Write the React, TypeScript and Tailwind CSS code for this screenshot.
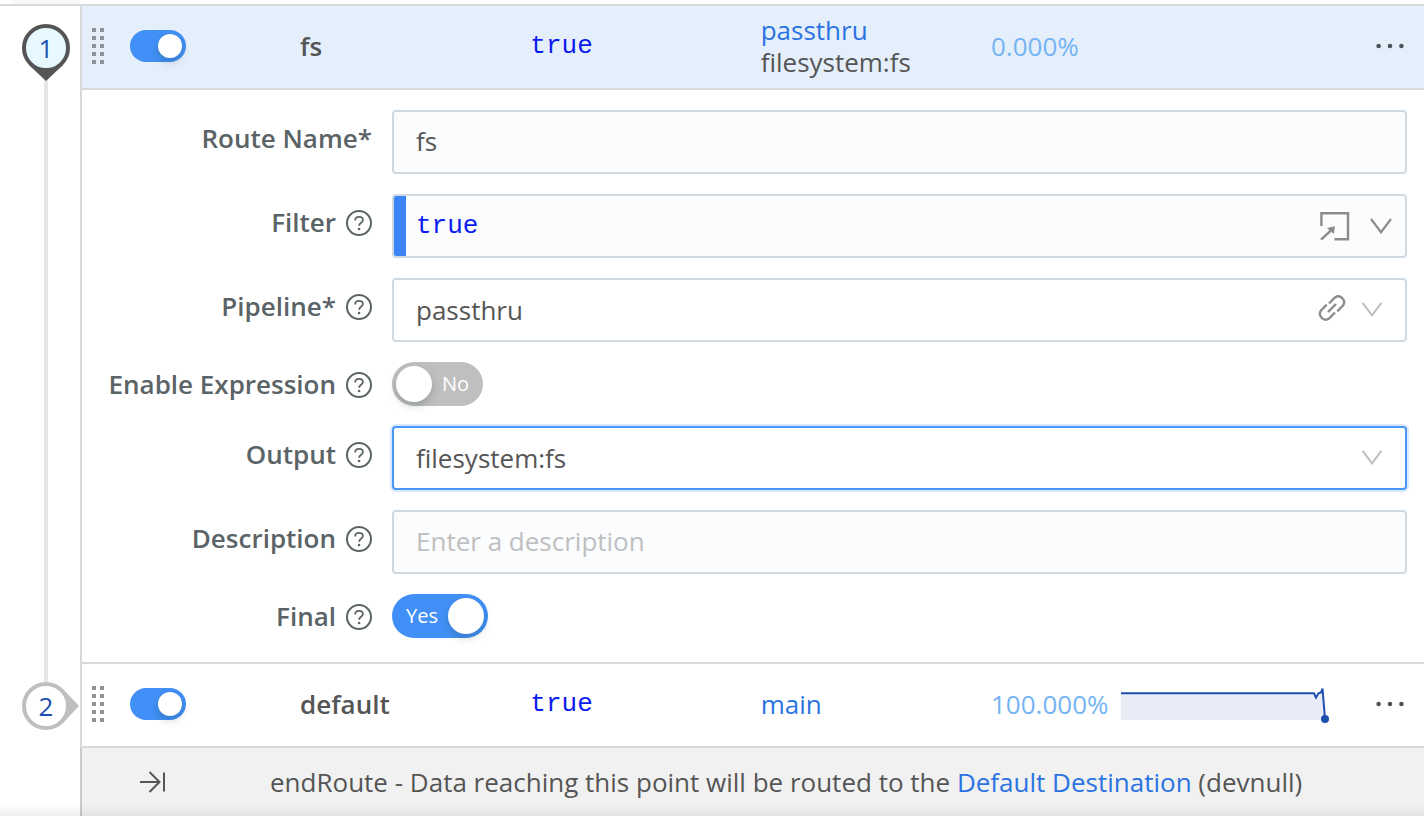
import { useState } from 'react'
import type { ReactNode } from 'react'
import clsx from 'clsx'

const ROW_GRID = 'grid grid-cols-[38px_170px_1fr_1fr_1fr_433px] items-center pl-[10px]'
const FIELD = 'h-16 w-full rounded-[4px] border-2 border-[#cfd9e1] px-[22px] pb-[2px] text-[26px] text-[#555] outline-none'

interface PinProps {
  index: number
  expanded?: boolean
}

/** Numbered marker in the gutter. Points down at an expanded route, right at a collapsed one. */
function RoutePin({ index, expanded }: PinProps) {
  return (
    <div className="relative ml-[22px] h-12 w-12 shrink-0">
      <svg
        viewBox="0 0 58 58"
        aria-hidden="true"
        className={clsx('absolute top-0 left-0 z-10 h-[58px] w-[58px]', expanded ? 'text-[#555]' : 'text-[#bfbfbf]')}
      >
        <path d={expanded ? 'M7 41 24 57 41 41Z' : 'M41 7 57 24 41 41Z'} fill="currentColor" />
        <circle cx="24" cy="24" r="22" fill={expanded ? '#e8f8ff' : '#fff'} stroke="currentColor" strokeWidth="4" />
      </svg>
      <span className="absolute inset-0 z-20 text-center text-[26px] leading-12 text-[#1d4fb0]">{index}</span>
    </div>
  )
}

function GripHandle() {
  return (
    <button type="button" aria-label="Drag to reorder" className="grid w-3 grid-cols-2 gap-1">
      {Array.from({ length: 10 }, (_, i) => (
        <span key={i} className="h-1 w-1 bg-[#8e9299]" />
      ))}
    </button>
  )
}

function RowSwitch({ label }: { label: string }) {
  const [on, setOn] = useState(true)
  return (
    <label
      className={clsx(
        'relative flex h-8 w-14 cursor-pointer items-center rounded-full px-1',
        on ? 'justify-end bg-[#4290f7]' : 'justify-start bg-[#bfbfbf]',
      )}
    >
      <input type="checkbox" role="switch" aria-label={label} checked={on} onChange={() => setOn(!on)} className="sr-only" />
      <span className="h-6 w-6 rounded-full bg-white shadow-[0_4px_8px_rgba(0,35,11,0.2)]" />
    </label>
  )
}

function YesNoSwitch({ id, initial }: { id: string; initial: boolean }) {
  const [on, setOn] = useState(initial)
  return (
    <label
      className={clsx(
        'relative flex h-11 cursor-pointer items-center gap-[10px] rounded-full text-[20px] font-medium text-white',
        on ? 'w-24 flex-row-reverse bg-[#4290f7] pr-1' : 'w-[91px] bg-[#bfbfbf] pl-1',
      )}
    >
      <input id={id} type="checkbox" role="switch" checked={on} onChange={() => setOn(!on)} className="sr-only" />
      <span className="h-9 w-9 rounded-full bg-white shadow-[0_4px_8px_rgba(0,35,11,0.2)]" />
      <span>{on ? 'Yes' : 'No'}</span>
    </label>
  )
}

function HelpIcon() {
  return (
    <button type="button" aria-label="Help" className="text-[#5a6366]">
      <svg width="26" height="26" viewBox="0 0 26 26" fill="none" stroke="currentColor" strokeWidth="2">
        <circle cx="13" cy="13" r="12" />
        <path d="M9.2 10.4C9.2 8 10.8 6.8 13 6.8s3.9 1.3 3.9 3.3c0 2.6-3.8 2.7-3.8 5.6" strokeWidth="1.8" />
        <circle cx="13.1" cy="19" r="1.3" fill="currentColor" stroke="none" />
      </svg>
    </button>
  )
}

function Chevron({ className }: { className: string }) {
  return (
    <svg viewBox="0 0 22 16" fill="none" stroke="currentColor" strokeWidth="2.2" aria-hidden="true" className={className}>
      <path d="M1 1 11 14.2 21 1" />
    </svg>
  )
}

interface FormRowProps {
  id: string
  label: string
  help?: boolean
  compact?: boolean
  children: ReactNode
}

function FormRow({ id, label, help = true, compact, children }: FormRowProps) {
  return (
    <div className="grid grid-cols-[290px_1fr] gap-5">
      <div className={clsx('flex items-center justify-end gap-[10px]', compact ? 'h-[46px] -mb-[2px]' : 'h-[58px]')}>
        <label htmlFor={id} className="pb-[2px] text-[26px] font-semibold whitespace-nowrap text-[#5a6366]">
          {label}
        </label>
        {help && <HelpIcon />}
      </div>
      <div className="flex min-w-0">{children}</div>
    </div>
  )
}

interface SelectFieldProps {
  id: string
  value: string
  active?: boolean
}

function SelectField({ id, value, active }: SelectFieldProps) {
  return (
    <select
      id={id}
      defaultValue={value}
      className={clsx(
        'h-16 w-full appearance-none rounded-[4px] border-2 bg-white px-[22px] text-[26px] text-[#555] outline-none',
        active ? 'border-[#4a98fa] shadow-[0_0_0_2px_#d9e8fc]' : 'border-[#cfd9e1]',
      )}
    >
      <option>{value}</option>
    </select>
  )
}

function MoreButton() {
  return (
    <button type="button" aria-label="More actions" className="ml-auto text-[#4d5257]">
      <svg width="28" height="6" viewBox="0 0 28 6" fill="currentColor">
        <circle cx="2.6" cy="3" r="2.3" />
        <circle cx="14" cy="3" r="2.3" />
        <circle cx="25.4" cy="3" r="2.3" />
      </svg>
    </button>
  )
}

function Sparkline() {
  return (
    <svg width="210" height="38" viewBox="0 0 210 38" fill="none" aria-hidden="true" className="ml-3">
      <path d="M0 8H193L195 12 198 8 201 4 204 35H0Z" fill="#e8ecf6" />
      <path d="M0 8.3H193L195 12.6 197.5 8.3 200 7.5 201.5 3.5 204 34" stroke="#1d4fb0" strokeWidth="2" />
      <circle cx="204" cy="34" r="4" fill="#1d4fb0" />
    </svg>
  )
}

function RouteForm() {
  return (
    <form className="flex flex-col gap-5 border-b-2 border-[#d9d9db] pt-5 pr-[17px] pb-6">
      <FormRow id="route-name" label="Route Name*" help={false}>
        <input id="route-name" type="text" defaultValue="fs" className={clsx(FIELD, 'bg-[#fafcfe]')} />
      </FormRow>
      <FormRow id="filter" label="Filter">
        <div className="flex h-16 w-full items-center overflow-hidden rounded-[4px] border-2 border-[#cfd9e1] bg-[#fafcfe] pr-[13px] text-[#8c8c8c]">
          <span className="w-3 self-stretch bg-[#3a84f7]" />
          <input
            id="filter"
            type="text"
            defaultValue="true"
            className="h-full min-w-0 flex-1 px-[10px] font-['Liberation_Mono',monospace] text-[26px] text-[#0a1cf0] outline-none"
          />
          <button type="button" aria-label="Open filter editor">
            <svg width="30" height="30" viewBox="0 0 30 30" fill="none" stroke="currentColor" strokeWidth="2.4">
              <path d="M1.4 15V2.2H28V28.2H14.5M1 28.6 12.5 18" />
              <path d="M7 17 15 15.2 13.8 23Z" fill="currentColor" stroke="none" />
            </svg>
          </button>
          <button type="button" aria-label="Expand filter" className="ml-5">
            <Chevron className="h-4 w-[22px]" />
          </button>
        </div>
      </FormRow>
      <FormRow id="pipeline" label="Pipeline*">
        <div className="relative w-full">
          <SelectField id="pipeline" value="passthru" />
          <button type="button" aria-label="Open pipeline" className="absolute top-4 right-[61px] text-[#8c8c8c]">
            <svg width="28" height="28" viewBox="0 0 28 28" fill="none" stroke="currentColor" strokeWidth="2.4">
              <path d="M11 9.5 17 3.5a5.8 5.8 0 0 1 8 8.1L19.3 17.3" />
              <path d="M17 18.5 11 24.5a5.8 5.8 0 0 1-8-8.1L8.7 10.7" />
              <path d="M10 18 18 10" />
            </svg>
          </button>
          <Chevron className="pointer-events-none absolute top-6 right-6 h-[15px] w-[22px] text-[#bfbfbf]" />
        </div>
      </FormRow>
      <FormRow id="enable-expression" label="Enable Expression" compact>
        <YesNoSwitch id="enable-expression" initial={false} />
      </FormRow>
      <FormRow id="output" label="Output">
        <div className="relative w-full">
          <SelectField id="output" value="filesystem:fs" active />
          <Chevron className="pointer-events-none absolute top-6 right-6 h-[15px] w-[22px] text-[#bfbfbf]" />
        </div>
      </FormRow>
      <FormRow id="description" label="Description">
        <input
          id="description"
          type="text"
          placeholder="Enter a description"
          className={clsx(FIELD, 'bg-[#fafcfe] placeholder:text-[#bfbfbf]')}
        />
      </FormRow>
      <FormRow id="final" label="Final" compact>
        <YesNoSwitch id="final" initial />
      </FormRow>
    </form>
  )
}

interface RouteRowProps {
  name: string
  pipeline: string
  output?: string
  share: string
  selected?: boolean
  chart?: boolean
}

function RouteRow({ name, pipeline, output, share, selected, chart }: RouteRowProps) {
  return (
    <div className={clsx(ROW_GRID, 'h-[84px] border-b-2 border-[#d9d9db] pb-[2px] text-[26px] leading-8', selected && 'bg-[#e4effb]')}>
      <GripHandle />
      <RowSwitch label={`Enable route ${name}`} />
      <span className="font-semibold text-[#555]">{name}</span>
      <code className="font-['Liberation_Mono',monospace] text-[#0a1cf0]">true</code>
      <div className="flex flex-col items-start text-[#555]">
        <a href="#pipeline" className="text-[#2b73e2]">
          {pipeline}
        </a>
        {output && <span>{output}</span>}
      </div>
      <div className="flex items-center pr-5 text-[#75b4f3]">
        <span>{share}</span>
        {chart && <Sparkline />}
        <MoreButton />
      </div>
    </div>
  )
}

export default function App() {
  return (
    <main className="relative min-h-screen overflow-hidden bg-white font-['Open_Sans',sans-serif]">
      <div className="h-1.5 border-b-2 border-[#d9d9db] pl-3">
        <div className="h-1 w-[68px] rounded-b-[4px] bg-[#f8f8f8]" />
      </div>

      <section className="grid grid-cols-[80px_1fr]">
        <div className="flex flex-col pt-[18px]">
          <RoutePin index={1} expanded />
          <div className="ml-11 w-1 flex-1 bg-[#e6e6e6]" />
        </div>
        <div className="border-l-2 border-[#d9d9db]">
          <RouteRow name="fs" pipeline="passthru" output="filesystem:fs" share="0.000%" selected />
          <RouteForm />
        </div>
      </section>

      <section className="grid grid-cols-[80px_1fr]">
        <div className="flex flex-col">
          <div className="ml-11 h-[18px] w-1 bg-[#e6e6e6]" />
          <RoutePin index={2} />
        </div>
        <div className="border-l-2 border-[#d9d9db]">
          <RouteRow name="default" pipeline="main" share="100.000%" chart />
        </div>
      </section>

      <footer className="ml-20 flex h-[68px] items-center border-l-2 border-[#cbcbcb] bg-[#f1f1f1] pl-[58px] text-[26px] text-[#555]">
        <svg width="26" height="26" viewBox="0 0 26 26" fill="none" stroke="currentColor" strokeWidth="2" aria-hidden="true">
          <path d="M0 13H19.5M9.5 3 19.5 13 9.5 23M24 3.5V22.5" />
        </svg>
        <p className="ml-[104px]">
          endRoute - Data reaching this point will be routed to the{' '}
          <a href="#destination" className="text-[#2b73e2]">
            Default Destination
          </a>{' '}
          (devnull)
        </p>
      </footer>

      <div className="pointer-events-none absolute inset-x-0 bottom-0 h-3 bg-linear-to-t from-black/6 to-transparent" />
    </main>
  )
}
